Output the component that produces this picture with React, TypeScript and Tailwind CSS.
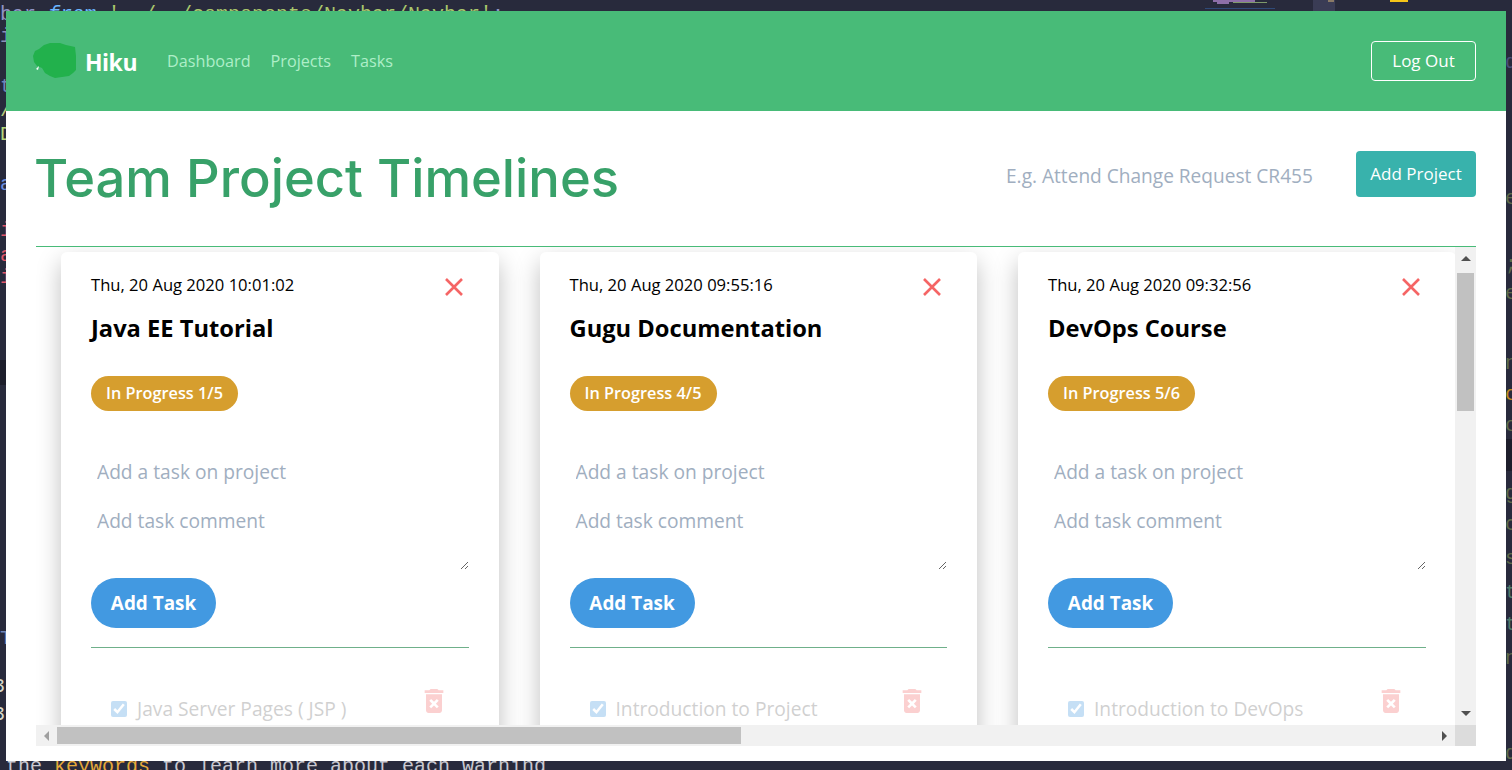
import { MdDeleteForever } from "react-icons/md";

const backdrop = [
  { text: "i", cls: "left-0 top-[22px] text-[#8a8fb8]" },
  { text: "t", cls: "left-0 top-[72px] text-[#6f86b8]" },
  { text: "/", cls: "left-0 top-[96px] text-[#b5c77a]" },
  { text: "D", cls: "left-0 top-[120px] text-[#b5d77a]" },
  { text: "a", cls: "left-0 top-[170px] text-[#6c8fe0]" },
  { text: "i", cls: "left-0 top-[216px] text-[#e0566a]" },
  { text: "a", cls: "left-0 top-[241px] text-[#e0566a]" },
  { text: "i", cls: "left-0 top-[263px] text-[#e0566a]" },
  { text: "T", cls: "left-0 top-[624px] text-[#6f86b8]" },
  { text: "3", cls: "left-[-7px] top-[672px] text-[#d8d8c8]" },
  { text: "3", cls: "left-[-7px] top-[700px] text-[#d8d8c8]" },
  { text: "d", cls: "left-[1505px] top-[48px] text-[#4a4f78]" },
  { text: "e", cls: "left-[1505px] top-[184px] text-[#5f6b4a]" },
  { text: ";", cls: "left-[1505px] top-[250px] text-[#5f6b4a]" },
  { text: "e", cls: "left-[1505px] top-[279px] text-[#5f6b4a]" },
  { text: "n", cls: "left-[1505px] top-[349px] text-[#5f6b4a]" },
  { text: "o", cls: "left-[1505px] top-[380px] text-[#c08a1e]" },
  { text: "o", cls: "left-[1505px] top-[411px] text-[#5f6b4a]" },
  { text: "o", cls: "left-[1505px] top-[443px] text-[#c08a1e]" },
  { text: "g", cls: "left-[1505px] top-[479px] text-[#5f6b4a]" },
  { text: "c", cls: "left-[1505px] top-[510px] text-[#5f6b4a]" },
  { text: "s", cls: "left-[1505px] top-[544px] text-[#5f6b4a]" },
  { text: "t", cls: "left-[1505px] top-[578px] text-[#4f7a6a]" },
  { text: "t", cls: "left-[1505px] top-[610px] text-[#4f7a6a]" },
  { text: "n", cls: "left-[1505px] top-[644px] text-[#5f6b4a]" },
  { text: "d", cls: "left-[1505px] top-[739px] text-[#5f6b4a]" },
];

const projects = [
  { date: "Thu, 20 Aug 2020 10:01:02", name: "Java EE Tutorial", progress: "In Progress 1/5", task: "Java Server Pages ( JSP )" },
  { date: "Thu, 20 Aug 2020 09:55:16", name: "Gugu Documentation", progress: "In Progress 4/5", task: "Introduction to Project" },
  { date: "Thu, 20 Aug 2020 09:32:56", name: "DevOps Course", progress: "In Progress 5/6", task: "Introduction to DevOps" },
];

function Logo() {
  return (
    <svg className="h-[38px] w-[44px] shrink-0" viewBox="0 0 44 38" aria-hidden="true">
      <path
        d="M11 3 L17 1 L27 1 L33 3 L42 5 L43 14 L43 28 L40 31 L36 34 L29 35 L22 36 L17 34 L12 31 L9 26 L4 24 L1 20 L0 14 L2 9 L6 7 Z"
        fill="#22b14c"
      />
      <path d="M3 27 L6 24 L5 28 Z" fill="#ffffff" />
    </svg>
  );
}

function ProjectCard({ date, name, progress, task }: (typeof projects)[number]) {
  return (
    <div className="h-[560px] w-[437.5px] shrink-0 rounded-md bg-white px-[30px] pt-[21px] shadow-[0_10px_25px_rgba(0,0,0,0.25)]">
      <div className="flex h-6 items-center justify-between">
        <span className="text-[16.6px] text-black">{date}</span>
        <svg className="mt-[3px] mr-[5px] h-5 w-5" viewBox="0 0 20 20" fill="none" stroke="#f56565" strokeWidth="2.6" aria-hidden="true">
          <path d="M2 2 L18 18 M18 2 L2 18" />
        </svg>
      </div>
      <h2 className="mt-[15px] text-[23.7px] leading-8 font-bold text-black">{name}</h2>
      <span className="mt-[32px] inline-flex h-[35px] items-center rounded-full bg-[#d69e2e] px-[15px] text-[16.3px] font-semibold text-white">
        {progress}
      </span>
      <input
        className="mt-[44px] block h-8 w-full px-[6px] text-[19.2px] outline-none placeholder:text-[#a0aec0]"
        placeholder="Add a task on project"
      />
      <textarea
        className="mt-[20px] block h-[63px] w-full px-[6px] py-0 text-[19.2px] leading-[27px] outline-none placeholder:text-[#a0aec0]"
        placeholder="Add task comment"
      />
      <button className="mt-[8px] block h-[50px] w-[125px] rounded-full bg-[#4299e1] text-[18.9px] font-bold text-white">
        Add Task
      </button>
      <div className="mt-[19px] h-px bg-[#6fb08a]" />
      <div className="mt-[37px] flex items-start justify-between pl-5">
        <label className="mt-[15px] flex items-center gap-[10px] opacity-30">
          <input type="checkbox" checked readOnly className="h-4 w-4 accent-[#4299e1]" />
          <span className="text-[19.2px] leading-[18px] text-[#666]">{task}</span>
        </label>
        <MdDeleteForever className="mr-[19px] text-[32px] text-[#f56565] opacity-30" />
      </div>
    </div>
  );
}

function Scrollbars() {
  return (
    <>
      <div className="absolute top-0 right-0 flex h-[478px] w-[21px] flex-col items-center bg-[#f1f1f1]">
        <div className="mt-[9px] h-0 w-0 border-x-[5px] border-b-[5px] border-x-transparent border-b-[#505050]" />
        <div className="mt-[12px] h-[138px] w-[17px] bg-[#c1c1c1]" />
        <div className="mt-auto mb-[9px] h-0 w-0 border-x-[5px] border-t-[5px] border-x-transparent border-t-[#505050]" />
      </div>
      <div className="absolute right-[21px] bottom-0 left-0 flex h-[21px] items-center bg-[#f1f1f1]">
        <div className="ml-2 h-0 w-0 border-y-[5px] border-r-[5px] border-y-transparent border-r-[#a0a0a0]" />
        <div className="ml-[8px] h-[17px] w-[684px] bg-[#c1c1c1]" />
        <div className="mr-2 ml-auto h-0 w-0 border-y-[5px] border-l-[5px] border-y-transparent border-l-[#505050]" />
      </div>
      <div className="absolute right-0 bottom-0 h-[21px] w-[21px] bg-[#dcdcdc]" />
    </>
  );
}

export default function App() {
  return (
    <div className="relative h-[770px] w-[1512px] overflow-hidden bg-[#282a3c] pt-[11px] pl-[6px] font-['Open_Sans',sans-serif]">
      {/* Editor showing behind the browser window */}
      <div className="absolute top-0 left-0 font-['Liberation_Mono',monospace] text-[20px] whitespace-pre text-[#8f94c4]">
        bar <span className="text-[#6cb6ff] italic">from</span> <span className="text-[#a8c66c]">'../../components/Navbar/Navbar'</span>;
      </div>
      {backdrop.map((item, i) => (
        <span key={i} className={`absolute font-['Liberation_Mono',monospace] text-[20px] ${item.cls}`}>
          {item.text}
        </span>
      ))}
      <div className="absolute top-[360px] left-0 h-[25px] w-[6px] bg-[#1d1e2b]" />
      <div className="absolute top-[439px] left-[1506px] h-[32px] w-[6px] bg-[#1d1e2b]" />
      <svg className="absolute top-0 left-[1205px] h-[11px] w-[70px]" viewBox="0 0 70 11" aria-hidden="true">
        <path d="M8 0 H50 V2 H24 V4 H12 V2 H8 Z" fill="#8d6fa8" />
        <path d="M28 2 H62 V3 H28 Z" fill="#7f9a6a" />
        <path d="M0 8 H70 V9 H0 Z" fill="#2f4a78" />
      </svg>
      <div className="absolute top-0 left-[1313px] h-[11px] w-[22px] bg-[#3a3c55]" />
      <div className="absolute top-0 left-[1328px] h-[2px] w-[6px] bg-[#8a7a66]" />
      <div className="absolute top-0 left-[1390px] h-[2px] w-[18px] bg-[#f5c518]" />
      <div className="absolute top-[752px] left-[6px] font-['Liberation_Mono',monospace] text-[20px] whitespace-pre text-[#c8c8d0]">
        the <span className="text-[#e5a93b]">keywords</span> to learn more about each warning
      </div>

      {/* Browser window */}
      <div className="relative flex h-[750px] w-[1500px] flex-col bg-white">
        <nav className="flex h-[100px] shrink-0 items-center bg-[#48bb78] pr-[30px] pl-[27px]">
          <Logo />
          <span className="mt-[3px] ml-[8px] text-[23px] font-bold tracking-[-0.5px] text-white">Hiku</span>
          <div className="mt-[1px] ml-[30px] flex items-center gap-5 text-[16.2px] text-[#aeeec8]">
            <a>Dashboard</a>
            <a>Projects</a>
            <a>Tasks</a>
          </div>
          <button className="mt-[-1px] ml-auto h-10 w-[105px] rounded border border-white pt-px text-[17px] text-white">
            Log Out
          </button>
        </nav>

        <div className="flex flex-1 flex-col px-[30px]">
          <div className="flex h-[136px] shrink-0 items-center justify-between border-b border-[#48bb78]">
            <h1 className="ml-[-2px] font-['Inter',sans-serif] text-[52.5px] font-medium text-[#38a169]">Team Project Timelines</h1>
            <div className="mb-[10px] flex items-center">
              <input
                className="mt-[6px] w-[354px] px-1 text-[19.1px] outline-none placeholder:text-[#a0aec0]"
                placeholder="E.g. Attend Change Request CR455"
              />
              <button className="h-[46px] w-[120px] rounded bg-[#38b2ac] text-[17px] text-white">Add Project</button>
            </div>
          </div>

          <div className="relative h-[499px] overflow-hidden pt-[5px] pl-[25px]">
            <div className="flex gap-[41px]">
              {projects.map((p) => (
                <ProjectCard key={p.name} {...p} />
              ))}
            </div>
            <Scrollbars />
          </div>
        </div>
      </div>
    </div>
  );
}
